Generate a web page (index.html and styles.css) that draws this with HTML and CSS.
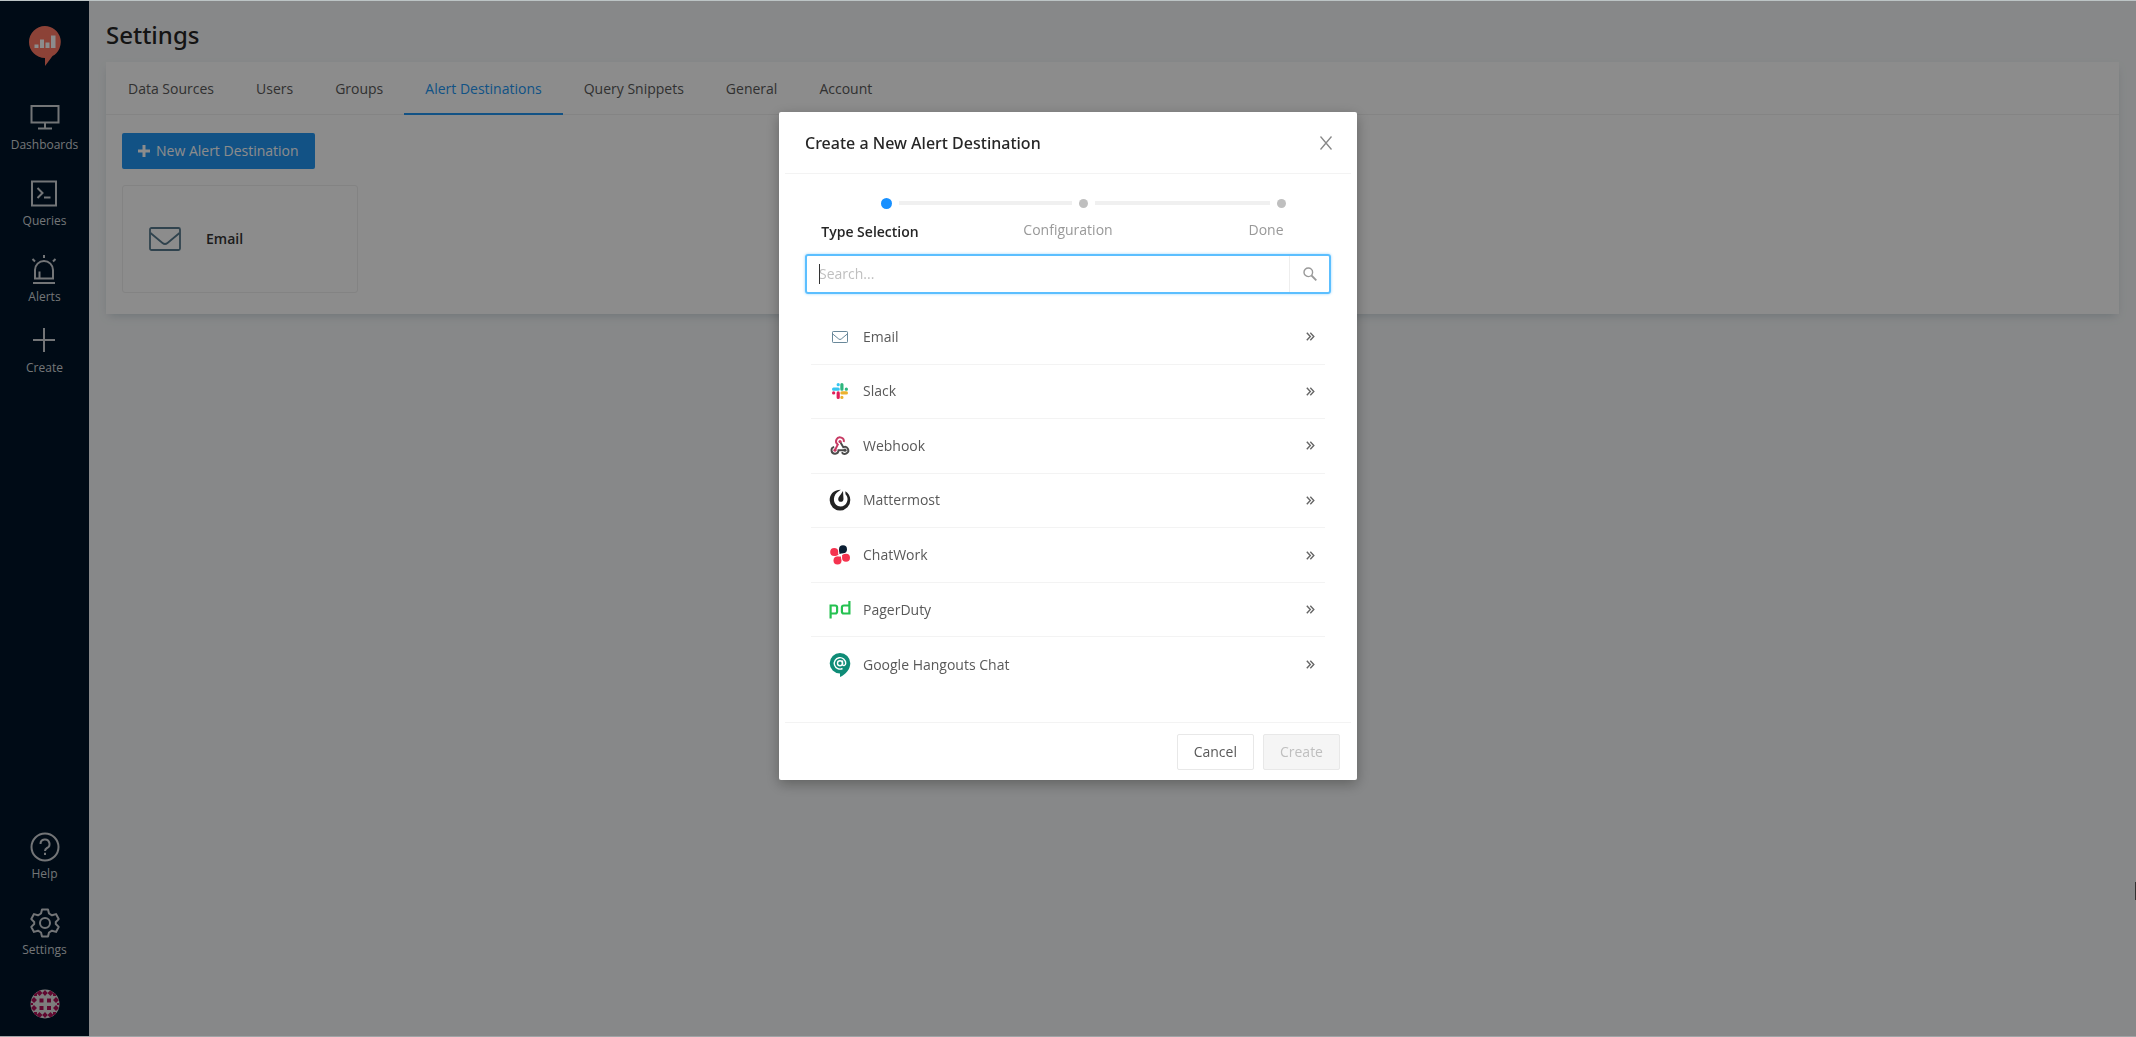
FILE: index.html
```html
<!DOCTYPE html>
<html lang="en">
<head>
    <meta charset="UTF-8">
    <meta name="viewport" content="width=device-width, initial-scale=1.0">
    <title>Settings</title>
    <link rel="stylesheet" href="styles.css">
</head>
<body>
    <!-- shared icons -->
    <svg class="sprite" aria-hidden="true">
        <symbol id="mail" viewBox="0 0 32 24">
            <rect x="1" y="1" width="30" height="22" rx="1.5" fill="none" stroke="#587b8e" stroke-width="1.8"/>
            <path d="M1.5 6 L13.5 16 Q16 18 18.5 16 L30.5 6" fill="none" stroke="#587b8e" stroke-width="1.8"/>
        </symbol>
        <symbol id="arrows" viewBox="0 0 9 9">
            <path d="M.8 .8 L4.3 4.5 L.8 8.2 M4.3 .8 L7.8 4.5 L4.3 8.2" fill="none" stroke="#666" stroke-width="1.4"/>
        </symbol>
    </svg>

    <nav class="sidebar">
        <a class="logo" href="#" aria-label="Home">
            <svg width="32" height="40" viewBox="0 0 32 40">
                <path d="M16 0a16 16 0 0 1 7.500 30L16 40V32A16 16 0 0 1 16 0z" fill="#ff7964"/>
                <path d="M5.500 18.500h4v3.500h-4zM11 13.500h4V22h-4zM16.500 16.500h4V22h-4zM22 9.500h4.500V22H22z" fill="#fff"/>
            </svg>
        </a>
        <a class="nav-item" href="#">
            <svg width="30" height="30" viewBox="0 0 30 30">
                <path d="M1.500 3h27v16.500h-27zM15 20v5M8 25.500h14" />
            </svg>
            Dashboards
        </a>
        <a class="nav-item" href="#">
            <svg width="30" height="30" viewBox="0 0 30 30">
                <path d="M3 2.500h24v24H3zM8.500 9l5 5-5 5M15 18.500h6.500" />
            </svg>
            Queries
        </a>
        <a class="nav-item" href="#">
            <svg width="30" height="30" viewBox="0 0 30 30">
                <path d="M6 23.500V15a9 9 0 0 1 18 0v8.500zM4 28h22M15 0v3M3.500 4l2.500 2.500M26.500 4L24 6.500M10.500 23v-6.500" />
            </svg>
            Alerts
        </a>
        <a class="nav-item nav-create" href="#">
            <svg width="24" height="24" viewBox="0 0 24 24">
                <path d="M12 0v24M1 12h22" />
            </svg>
            Create
        </a>
        <div class="nav-bottom">
            <a class="nav-item" href="#">
                <svg width="30" height="30" viewBox="0 0 30 30">
                    <circle cx="15" cy="15" r="13.500"/>
                    <path d="M10.500 12a4.500 4.500 0 1 1 6.500 4c-1.500.8-2 1.500-2 3M15 20.800v2.200"/>
                </svg>
                Help
            </a>
            <a class="nav-item" href="#">
                <svg width="30" height="30" viewBox="0 0 30 30">
                    <circle cx="15" cy="15" r="5"/>
                    <path d="M12 1.500h6l1 4 3 1.800 4-1.200 2.700 5-2.900 2.900v2l2.900 2.900-2.700 5-4-1.200-3 1.800-1 4h-6l-1-4-3-1.800-4 1.200-2.700-5L4.200 16v-2l-2.900-2.900 2.700-5 4 1.200 3-1.800z" stroke-linejoin="round"/>
                </svg>
                Settings
            </a>
            <a class="avatar" href="#" aria-label="Profile">
                <svg width="30" height="30" viewBox="0 0 30 30">
                    <clipPath id="round"><circle cx="15" cy="15" r="14.500"/></clipPath>
                    <g clip-path="url(#round)">
                        <path d="M0 0h30v30H0z" fill="#e4e4e4"/>
                        <g fill="#b01058">
                            <path d="M9.500 9.500h4V13.500h-4zM17 9.500h4V13.500h-4zM9.500 17h4v4h-4zM17 17h4v4h-4z"/>
                            <path d="M9.500 1l3 3-3 3-3-3zM15 1l2.700 3L15 7l-2.700-3zM20.500 1l3 3-3 3-3-3z"/>
                            <path d="M9.500 23l3 3-3 3-3-3zM15 23l2.700 3-2.700 3-2.700-3zM20.500 23l3 3-3 3-3-3z"/>
                            <path d="M4 8l3 3-3 3-3-3zM4 16l3 3-3 3-3-3zM26 8l3 3-3 3-3-3zM26 16l3 3-3 3-3-3z"/>
                            <path d="M4 4h3v3H4zM23 4h3v3h-3zM4 23h3v3H4zM23 23h3v3h-3zM0 14h3v2H0zM27 14h3v2h-3z"/>
                        </g>
                    </g>
                </svg>
            </a>
        </div>
    </nav>

    <main class="content">
        <h1>Settings</h1>
        <div class="panel">
            <div class="tabs">
                <a href="#">Data Sources</a>
                <a href="#">Users</a>
                <a href="#">Groups</a>
                <a href="#" class="active">Alert Destinations</a>
                <a href="#">Query Snippets</a>
                <a href="#">General</a>
                <a href="#">Account</a>
            </div>
            <div class="panel-body">
                <button type="button" class="btn-new">
                    <svg width="12" height="12" viewBox="0 0 12 12"><path d="M6 0v12M0 6h12" stroke="#fff" stroke-width="3"/></svg>
                    New Alert Destination
                </button>
                <a class="card" href="#">
                    <svg width="32" height="24"><use href="#mail"/></svg>
                    Email
                </a>
            </div>
        </div>
    </main>

    <div class="mask">
        <div class="modal" role="dialog" aria-labelledby="modal-title">
            <div class="modal-header">
                <h2 id="modal-title">Create a New Alert Destination</h2>
                <button type="button" class="close" aria-label="Close">
                    <svg width="12" height="14" viewBox="0 0 12 14"><path d="M.5 .5l11 13M11.500 .5L.5 13.500" fill="none" stroke="#888" stroke-width="1.300"/></svg>
                </button>
            </div>
            <div class="modal-body">
                <ol class="steps">
                    <li class="current"><div class="track"><i class="dot"></i><i class="line"></i></div><span>Type Selection</span></li>
                    <li><div class="track"><i class="dot"></i><i class="line"></i></div><span>Configuration</span></li>
                    <li><div class="track"><i class="dot"></i></div><span>Done</span></li>
                </ol>
                <div class="search">
                    <input type="text" placeholder="Search..." aria-label="Search">
                    <i class="caret"></i>
                    <button type="button" aria-label="Search">
                        <svg width="14" height="14" viewBox="0 0 14 14"><circle cx="5.300" cy="5.300" r="4.300" fill="none" stroke="#999" stroke-width="1.400"/><path d="M8.500 8.500l4.800 4.800" stroke="#999" stroke-width="1.800"/></svg>
                    </button>
                </div>
                <ul class="types">
                    <li><a href="#">
                        <svg class="icon" viewBox="0 0 24 24"><use href="#mail" x="4" y="6" width="16" height="12"/></svg>
                        <span>Email</span>
                        <svg class="go"><use href="#arrows"/></svg>
                    </a></li>
                    <li><a href="#">
                        <svg class="icon" viewBox="0 0 24 24">
                            <g fill="none" stroke-width="3.200" stroke-linecap="round">
                                <path d="M5.600 10.200h4.600M10.200 5.600v.1" stroke="#36c5f0"/>
                                <path d="M13.900 5.600v4.600M18.400 10.200h-.1" stroke="#2eb67d"/>
                                <path d="M18.400 13.900h-4.500M13.900 18.400v-.1" stroke="#ecb22e"/>
                                <path d="M10.200 18.400v-4.500M5.600 13.900h.1" stroke="#e01e5a"/>
                            </g>
                        </svg>
                        <span>Slack</span>
                        <svg class="go"><use href="#arrows"/></svg>
                    </a></li>
                    <li><a href="#">
                        <svg class="icon" viewBox="0 0 24 24">
                            <g fill="none" stroke-width="1.900">
                                <path d="M15.800 8A3.900 3.900 0 1 0 9.800 10.500L7.300 15.500" stroke="#c73a63"/>
                                <path d="M12 7.500l3.300 5.700a3.500 3.500 0 1 1-1.500 5" stroke="#4b4b4b"/>
                                <path d="M6.200 12.800a3.500 3.500 0 1 0 4.300 3.400h6" stroke="#4b4b4b"/>
                            </g>
                            <circle cx="12" cy="7.500" r="1.600" fill="#c73a63"/>
                            <circle cx="7" cy="16.200" r="1.600" fill="#c73a63"/>
                            <circle cx="17" cy="16.200" r="1.600" fill="#4b4b4b"/>
                        </svg>
                        <span>Webhook</span>
                        <svg class="go"><use href="#arrows"/></svg>
                    </a></li>
                    <li><a href="#">
                        <svg class="icon" viewBox="0 0 24 24">
                            <path d="M12.800 1.800C5 2 1.500 7 1.700 12.500A10.300 10.300 0 0 0 22.300 12c0-4-2-7-5-8.800l.2 3A7.300 7.300 0 0 1 12.500 18.500C5 18 4 9 9 4.500z" fill="#222"/>
                            <path d="M15 3l.5 8c0 4-5.500 3.500-5.300.2 0-2 1.500-3.200 2.500-4.700z" fill="#222"/>
                        </svg>
                        <span>Mattermost</span>
                        <svg class="go"><use href="#arrows"/></svg>
                    </a></li>
                    <li><a href="#">
                        <svg class="icon" viewBox="0 0 24 24">
                            <circle cx="15" cy="6.200" r="4" fill="#0b1f33"/><path d="M11 6l.5 5 4-1z" fill="#0b1f33"/>
                            <g fill="#f5334f">
                                <circle cx="6.200" cy="9" r="4"/><path d="M9 6l1.500 6-4 1z"/>
                                <circle cx="9.500" cy="17.500" r="4"/><path d="M7 14l6-.5v4z"/>
                                <circle cx="18" cy="14.800" r="4"/><path d="M14 12l4-1-2 7z"/>
                            </g>
                        </svg>
                        <span>ChatWork</span>
                        <svg class="go"><use href="#arrows"/></svg>
                    </a></li>
                    <li><a href="#">
                        <svg class="icon" viewBox="0 0 24 24">
                            <g fill="none" stroke="#25c151" stroke-width="2.200">
                                <path d="M2.600 20.500V7.500h4.500a2 2 0 0 1 2 2v4a2 2 0 0 1-2 2H3"/>
                                <path d="M21.400 3v12.500h-5.500a2 2 0 0 1-2-2v-4a2 2 0 0 1 2-2H21"/>
                            </g>
                        </svg>
                        <span>PagerDuty</span>
                        <svg class="go"><use href="#arrows"/></svg>
                    </a></li>
                    <li><a href="#">
                        <svg class="icon" viewBox="0 0 24 24">
                            <path d="M12 0a10.300 10.300 0 0 1 10.300 10.300C22.300 16 18 21.500 12 24v-3.400A10.300 10.300 0 0 1 12 0z" fill="#0f8c77"/>
                            <g fill="none" stroke="#fff" stroke-width="1.400">
                                <circle cx="12" cy="10.300" r="2.500"/>
                                <path d="M14.500 7.500v3.500c0 2.500 3.200 2 3.200-.7A5.700 5.700 0 1 0 14.500 15.500"/>
                            </g>
                        </svg>
                        <span>Google Hangouts Chat</span>
                        <svg class="go"><use href="#arrows"/></svg>
                    </a></li>
                </ul>
            </div>
            <div class="modal-footer">
                <button type="button">Cancel</button>
                <button type="button" disabled>Create</button>
            </div>
        </div>
        <i class="edge-mark"></i>
    </div>
</body>
</html>
```

FILE: styles.css
```css
* {
    box-sizing: border-box;
}
body {
    margin: 0;
    min-height: 100vh;
    display: flex;
    background: #f6f8f9;
    border-top: 1px solid #bcc4c5;
    border-bottom: 1px solid #a0a4a6;
    font: 14px/22px "Open Sans", "Noto Sans", sans-serif;
    color: #595959;
}
a {
    color: inherit;
    text-decoration: none;
}
button, input {
    font: inherit;
}
h1, h2 {
    font-family: "Noto Sans", "Open Sans", sans-serif;
    font-weight: 500;
    color: #262626;
}
ul, ol {
    margin: 0;
    padding: 0;
    list-style: none;
}
svg {
    display: block;
    flex: none;
}
.sprite {
    position: absolute;
    width: 0;
    height: 0;
}

/* sidebar */
.sidebar {
    width: 89px;
    flex: none;
    display: flex;
    flex-direction: column;
    align-items: center;
    gap: 25px;
    padding: 25px 0 17px;
    background: #001529;
    font-size: 12px;
    line-height: 18px;
    font-weight: 500;
    color: #d2d5d9;
}
.logo {
    margin-bottom: 12px;
}
.nav-item {
    display: flex;
    flex-direction: column;
    align-items: center;
    gap: 3px;
}
.nav-item svg {
    fill: none;
    stroke: #d2d5d9;
    stroke-width: 2;
}
.nav-create {
    gap: 7px;
    margin-top: -3px;
}
.nav-bottom {
    margin-top: auto;
    display: flex;
    flex-direction: column;
    align-items: center;
    gap: 25px;
}
.avatar {
    margin-top: 5px;
}

/* page */
.content {
    flex: 1;
    padding: 16px 17px;
}
h1 {
    margin: 0 0 9px;
    font-size: 24px;
    line-height: 36px;
}
.panel {
    background: #fff;
    box-shadow: 0 4px 9px -3px rgba(102, 136, 153, 0.35);
}
.tabs {
    display: flex;
    padding-left: 1px;
    border-bottom: 1px solid #f0f0f0;
}
.tabs a {
    padding: 16px 21px 13px;
    border-bottom: 2px solid transparent;
    margin-bottom: -1px;
}
.tabs .active {
    color: #2196f3;
    border-color: #2196f3;
}
.panel-body {
    padding: 18px 16px 21px;
}
.btn-new {
    display: flex;
    align-items: center;
    gap: 6px;
    height: 36px;
    padding: 0 16px;
    border: 0;
    border-radius: 2px;
    background: #2196f3;
    color: #fff;
}
.card {
    display: flex;
    align-items: center;
    gap: 25px;
    width: 236px;
    height: 108px;
    margin-top: 16px;
    padding: 0 26px;
    border: 1px solid #eee;
    border-radius: 3px;
    font-weight: 600;
    color: #333;
}

/* modal */
.mask {
    position: fixed;
    inset: 1px 0;
    padding-top: 111px;
    background: rgba(0, 0, 0, 0.45);
}
.modal {
    width: 100%;
    max-width: 578px;
    margin: 0 auto;
    background: #fff;
    border-radius: 2px;
    box-shadow: 0 4px 14px rgba(0, 0, 0, 0.3);
}
.modal-header {
    display: flex;
    align-items: center;
    justify-content: space-between;
    margin: 0 6px;
    padding: 19px 19px 18px 20px;
    border-bottom: 1px solid #f3f3f3;
}
.modal-header h2 {
    margin: 0;
    font-size: 16px;
    line-height: 24px;
}
.close {
    padding: 0;
    border: 0;
    background: none;
}
.modal-body {
    padding: 23px 26px 30px;
}
.steps {
    display: flex;
    margin: 0 -5px;
    color: #999;
}
.steps li {
    flex: 1;
}
.steps li:last-child {
    flex: 0 0 140px;
}
.track {
    display: flex;
    align-items: center;
    height: 12px;
    padding-left: 81px;
    gap: 7px;
}
.dot {
    width: 9px;
    height: 9px;
    border-radius: 50%;
    background: #bfbfbf;
}
.current .dot {
    width: 11px;
    height: 11px;
    background: #1890ff;
}
.line {
    flex: 1;
    height: 4px;
    margin-right: -74px;
    background: #f0f0f0;
}
.steps span {
    display: block;
    width: 140px;
    margin-top: 10px;
    text-align: center;
}
.steps .current span {
    margin-top: 12px;
    font-weight: 600;
    color: #262626;
}
.search {
    position: relative;
    display: flex;
    height: 40px;
    margin-top: 11px;
    border: 2px solid #5cbfff;
    border-radius: 3px;
    box-shadow: 0 0 3px #9bd6ff;
}
.search input {
    flex: 1;
    padding: 0 12px;
    border: 0;
    outline: 0;
    background: none;
}
.search input::placeholder {
    color: #bfbfbf;
}
.search .caret {
    position: absolute;
    left: 12px;
    top: 8px;
    width: 1px;
    height: 20px;
    background: #333;
}
.search button {
    width: 40px;
    padding: 0 13px;
    border: 0;
    border-left: 1px solid #eee;
    background: none;
}
.types {
    display: grid;
    grid-auto-rows: 1fr;
    min-height: 382px;
    margin: 16px 6px 0;
}
.types li {
    border-bottom: 1px solid #f3f3f3;
}
.types li:last-child {
    border-bottom: 0;
}
.types a {
    display: flex;
    align-items: center;
    gap: 11px;
    height: 100%;
    padding: 0 10px 0 17px;
}
.types span {
    flex: 1;
}
.icon {
    width: 24px;
    height: 24px;
}
.go {
    width: 9px;
    height: 9px;
}
.modal-footer {
    display: flex;
    justify-content: flex-end;
    gap: 9px;
    margin: 0 6px;
    padding: 11px 11px 10px;
    border-top: 1px solid #f3f3f3;
}
.modal-footer button {
    height: 36px;
    padding: 0 16px;
    border: 1px solid #e8e8e8;
    border-radius: 2px;
    background: #fff;
    color: #595959;
}
.modal-footer button:disabled {
    background: #f5f5f5;
    color: #bfbfbf;
}
.edge-mark {
    position: absolute;
    right: 0;
    top: 881px;
    width: 1px;
    height: 18px;
    background: #333;
}
```
